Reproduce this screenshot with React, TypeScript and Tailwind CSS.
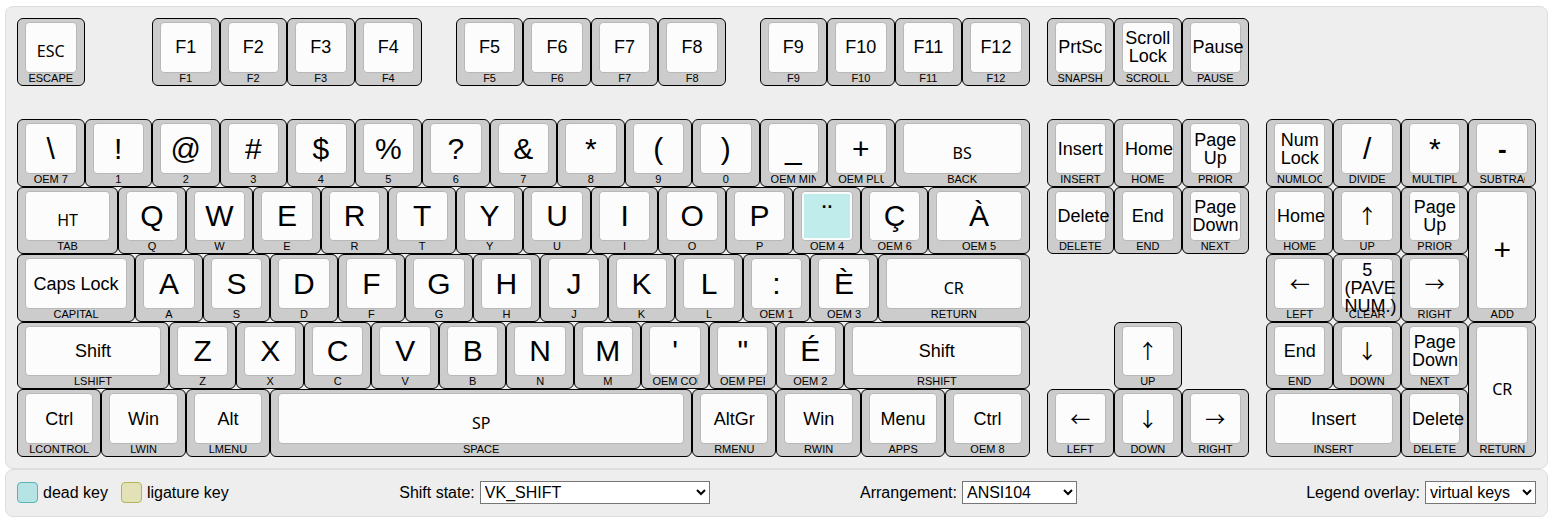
import React, { useState } from "react";

type Kind = "char" | "name" | "control" | "dead" | "arrow" | "minus";

interface KeyDef {
  label: string;
  vk: string;
  kind: Kind;
  /** Width in quarter units. */
  w: number;
  /** Height in half units. */
  h: number;
  /** Left edge in quarter units. */
  x: number;
  /** Top edge in half units. */
  y: number;
}

type Spec = [label: string, vk: string, kind?: Kind, w?: number, h?: number];

function row(x: number, y: number, specs: Spec[]): KeyDef[] {
  let left = x;
  return specs.map(([label, vk, kind = "char", w = 4, h = 2]) => {
    const key = { label, vk, kind, w, h, x: left, y };
    left += w;
    return key;
  });
}

function letters(text: string): Spec[] {
  return text.split("").map((c): Spec => [c, c]);
}

function fkeys(first: number): Spec[] {
  return [0, 1, 2, 3].map((i): Spec => [`F${first + i}`, `F${first + i}`, "name"]);
}

const KEYS: KeyDef[] = [
  ...row(0, 0, [["ESC", "ESCAPE", "control"]]),
  ...row(8, 0, fkeys(1)),
  ...row(26, 0, fkeys(5)),
  ...row(44, 0, fkeys(9)),
  ...row(61, 0, [
    ["PrtSc", "SNAPSHOT", "name"],
    ["Scroll Lock", "SCROLL", "name"],
    ["Pause", "PAUSE", "name"],
  ]),
  ...row(0, 3, [
    ["\\", "OEM 7"],
    ["!", "1"],
    ["@", "2"],
    ["#", "3"],
    ["$", "4"],
    ["%", "5"],
    ["?", "6"],
    ["&", "7"],
    ["*", "8"],
    ["(", "9"],
    [")", "0"],
    ["_", "OEM MINUS"],
    ["+", "OEM PLUS"],
    ["BS", "BACK", "control", 8],
  ]),
  ...row(61, 3, [
    ["Insert", "INSERT", "name"],
    ["Home", "HOME", "name"],
    ["Page Up", "PRIOR", "name"],
  ]),
  ...row(74, 3, [
    ["Num Lock", "NUMLOCK", "name"],
    ["/", "DIVIDE"],
    ["*", "MULTIPLY"],
    ["-", "SUBTRACT", "minus"],
  ]),
  ...row(0, 5, [
    ["HT", "TAB", "control", 6],
    ...letters("QWERTYUIOP"),
    ["¨", "OEM 4", "dead"],
    ["Ç", "OEM 6"],
    ["À", "OEM 5", "char", 6],
  ]),
  ...row(61, 5, [
    ["Delete", "DELETE", "name"],
    ["End", "END", "name"],
    ["Page Down", "NEXT", "name"],
  ]),
  ...row(74, 5, [
    ["Home", "HOME", "name"],
    ["↑", "UP", "arrow"],
    ["Page Up", "PRIOR", "name"],
    ["+", "ADD", "char", 4, 4],
  ]),
  ...row(0, 7, [
    ["Caps Lock", "CAPITAL", "name", 7],
    ...letters("ASDFGHJKL"),
    [":", "OEM 1"],
    ["È", "OEM 3"],
    ["CR", "RETURN", "control", 9],
  ]),
  ...row(74, 7, [
    ["←", "LEFT", "arrow"],
    ["5 (PAVE NUM.)", "CLEAR", "name"],
    ["→", "RIGHT", "arrow"],
  ]),
  ...row(0, 9, [
    ["Shift", "LSHIFT", "name", 9],
    ...letters("ZXCVBNM"),
    ["'", "OEM COMMA"],
    ['"', "OEM PERIOD"],
    ["É", "OEM 2"],
    ["Shift", "RSHIFT", "name", 11],
  ]),
  ...row(65, 9, [["↑", "UP", "arrow"]]),
  ...row(74, 9, [
    ["End", "END", "name"],
    ["↓", "DOWN", "arrow"],
    ["Page Down", "NEXT", "name"],
    ["CR", "RETURN", "control", 4, 4],
  ]),
  ...row(0, 11, [
    ["Ctrl", "LCONTROL", "name", 5],
    ["Win", "LWIN", "name", 5],
    ["Alt", "LMENU", "name", 5],
    ["SP", "SPACE", "control", 25],
    ["AltGr", "RMENU", "name", 5],
    ["Win", "RWIN", "name", 5],
    ["Menu", "APPS", "name", 5],
    ["Ctrl", "OEM 8", "name", 5],
  ]),
  ...row(61, 11, [
    ["←", "LEFT", "arrow"],
    ["↓", "DOWN", "arrow"],
    ["→", "RIGHT", "arrow"],
  ]),
  ...row(74, 11, [
    ["Insert", "INSERT", "name", 8],
    ["Delete", "DELETE", "name"],
  ]),
];

const LABEL_STYLE: Record<Kind, string> = {
  char: "text-[30px] leading-[34px]",
  dead: "bg-[#c0ecec] text-[30px] leading-[34px]",
  name: "text-[18px] leading-[18px]",
  arrow: "font-['Noto_Sans_CJK_JP',sans-serif] text-[20px] leading-[20px]",
  minus: "font-bold text-[26px] leading-[34px]",
  control: "pt-2 font-['Noto_Sans',sans-serif] text-[16px] leading-[18px]",
};

function Key({ k }: { k: KeyDef }) {
  return (
    <button
      type="button"
      className="flex min-h-0 min-w-0 flex-col rounded-[6px] border border-black bg-[#cccccc] px-[7px] pt-[3px] pb-px"
      style={{
        gridColumn: `${k.x + 1} / span ${k.w}`,
        gridRow: `${k.y + 1} / span ${k.h}`,
      }}
    >
      <span className="flex min-h-0 w-full flex-1 rounded-[4px] border border-[#b8b8b8] bg-[#fcfcfc] p-[2px]">
        <span
          className={`flex min-h-0 w-full min-w-0 [align-items:safe_center] ${LABEL_STYLE[k.kind]}`}
        >
          <span className="block w-full min-w-0 text-center">{k.label}</span>
        </span>
      </span>
      <span className="flex w-full px-[3px]">
        <span className="block w-full overflow-hidden text-center text-[11px] leading-[11px] whitespace-nowrap">
          {k.vk}
        </span>
      </span>
    </button>
  );
}

interface PickerProps {
  id: string;
  label: string;
  options: string[];
  selectClass: string;
  className: string;
}

function Picker({ id, label, options, selectClass, className }: PickerProps) {
  const [value, setValue] = useState(options[0]);
  return (
    <div className={`flex items-center gap-[5px] whitespace-nowrap ${className}`}>
      <label htmlFor={id}>{label}</label>
      <select
        id={id}
        value={value}
        onChange={(e) => setValue(e.target.value)}
        className={`h-[23px] border border-[#767676] bg-white ${selectClass}`}
      >
        {options.map((o) => (
          <option key={o}>{o}</option>
        ))}
      </select>
    </div>
  );
}

export default function App() {
  return (
    <main className="mt-[6px] mr-2 ml-[5px] font-['Liberation_Sans',Arial,sans-serif] text-base text-black">
      <section
        aria-label="Keyboard"
        className="rounded-lg border border-[#dddddd] bg-[#eeeeee] p-[11px]"
      >
        <div className="grid aspect-[45/13] w-full grid-cols-[repeat(90,minmax(0,1fr))] grid-rows-[repeat(13,minmax(0,1fr))]">
          {KEYS.map((k) => (
            <Key key={`${k.x}-${k.y}`} k={k} />
          ))}
        </div>
      </section>
      <section
        aria-label="Options"
        className="grid grid-cols-[331fr_413fr_415fr_360fr] items-center rounded-lg border border-[#dddddd] bg-[#eeeeee] p-[11px]"
      >
        <div className="flex items-center gap-[13px] whitespace-nowrap">
          <span className="flex items-center gap-[5px]">
            <span className="size-[21px] rounded-[4px] border border-[#5ab3b5] bg-[#b6e3e4]" />
            dead key
          </span>
          <span className="flex items-center gap-[5px]">
            <span className="size-[21px] rounded-[4px] border border-[#b5b35a] bg-[#e3e1b6]" />
            ligature key
          </span>
        </div>
        <Picker
          id="shift-state"
          label="Shift state:"
          options={["VK_SHIFT"]}
          selectClass="w-[230px]"
          className="justify-center"
        />
        <Picker
          id="arrangement"
          label="Arrangement:"
          options={["ANSI104"]}
          selectClass="w-[115px]"
          className="justify-center"
        />
        <Picker
          id="overlay"
          label="Legend overlay:"
          options={["virtual keys"]}
          selectClass="w-[111px]"
          className="justify-end"
        />
      </section>
    </main>
  );
}
